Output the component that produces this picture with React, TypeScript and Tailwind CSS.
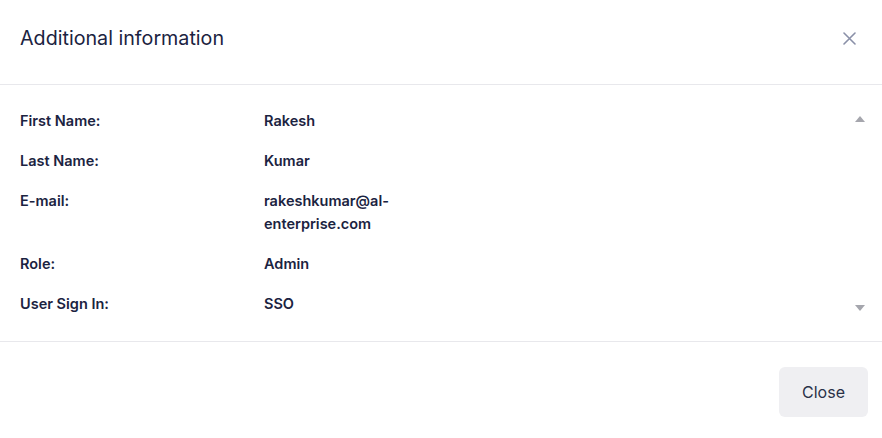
import React from "react";

const rows: { label: string; value: string }[] = [
  { label: "First Name:", value: "Rakesh" },
  { label: "Last Name:", value: "Kumar" },
  { label: "E-mail:", value: "rakeshkumar@al-enterprise.com" },
  { label: "Role:", value: "Admin" },
  { label: "User Sign In:", value: "SSO" },
];

export default function App() {
  return (
    <div
      className="w-[882px] h-[438px] bg-white flex flex-col text-[#1b2341]"
      style={{ fontFamily: "Inter, 'Noto Sans', sans-serif" }}
    >
      <div className="flex items-start justify-between pl-5 pr-[26px] pt-[24px] h-[85px] border-b border-[#e8e8ec]">
        <h2 className="text-[19.7px] leading-[28px] font-normal">Additional information</h2>
        <button className="mt-[7px] w-[14px] h-[14px] flex items-center justify-center text-[#8a90a8]">
          <svg width="13" height="13" viewBox="0 0 13 13" fill="none" stroke="currentColor" strokeWidth="1.6" strokeLinecap="round">
            <path d="M1 1L12 12M12 1L1 12" />
          </svg>
        </button>
      </div>
      <div className="flex h-[257px] border-b border-[#e8e8ec]">
        <div className="flex-1 flex flex-col gap-[17px] pl-5 pt-[23.5px]">
          {rows.map((r) => (
            <div key={r.label} className="flex text-[14.5px] leading-[23px] font-semibold">
              <div className="w-[244px] shrink-0">{r.label}</div>
              <div className="w-[140px] break-words">{r.value}</div>
            </div>
          ))}
        </div>
        <div className="w-[44px] flex flex-col justify-between items-center pt-[31px] pb-[30px]">
          <svg width="10" height="6" viewBox="0 0 10 6">
            <path d="M5 0L10 6H0Z" fill="#a5a6ad" />
          </svg>
          <svg width="10" height="6" viewBox="0 0 10 6">
            <path d="M0 0H10L5 6Z" fill="#a5a6ad" />
          </svg>
        </div>
      </div>
      <div className="flex justify-end pt-[25px] pr-[14px]">
        <button className="w-[89px] h-[50px] rounded-[6px] bg-[#efeff2] text-[16px] text-[#2a3148]">
          Close
        </button>
      </div>
    </div>
  );
}
